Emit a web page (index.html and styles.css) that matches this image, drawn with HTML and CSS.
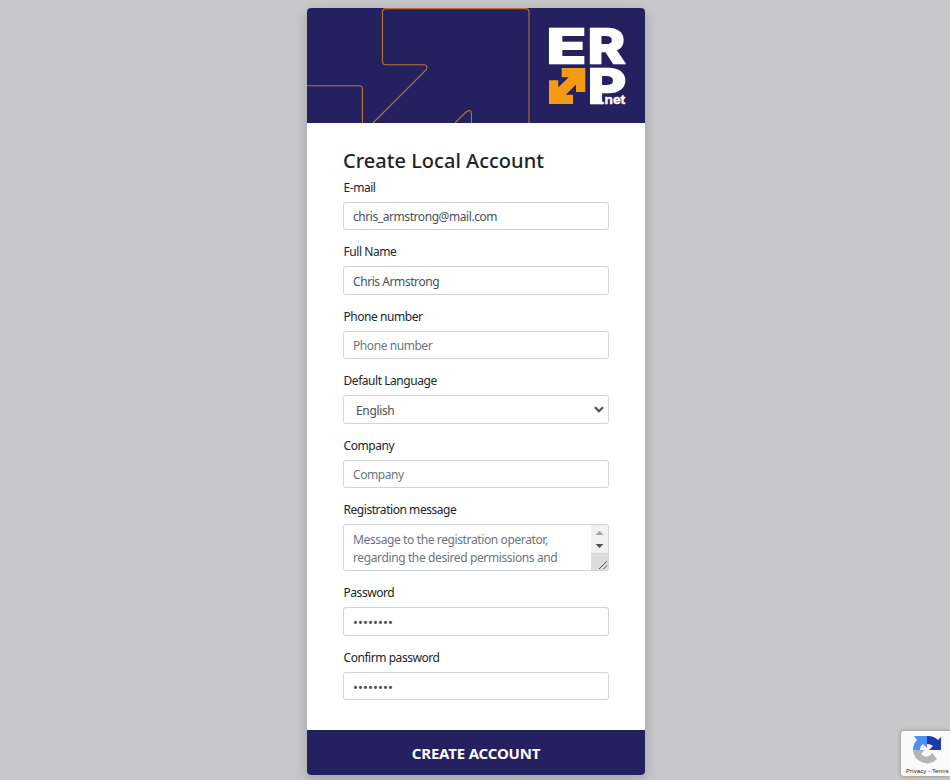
FILE: index.html
```html
<!DOCTYPE html>
<html lang="en">
<head>
<meta charset="utf-8">
<title>Create Local Account</title>
<link rel="stylesheet" href="styles.css">
</head>
<body>
<form class="card">
  <header class="banner">
    <svg width="338" height="115" viewBox="0 0 338 115">
      <g fill="none" stroke="#b3772f" stroke-width="1.1">
        <path d="M0 77.7H52Q55.4 77.7 55.4 81V115"/>
        <path d="M66 115L119 62Q121.500 57.200 117 56.800H79Q75.500 56.800 75.500 53V4Q75.500.6 79 .6H218.500Q222 .6 222 4V115"/>
        <path d="M148 115L159 104Q164.500 100.500 164.500 106V115"/>
      </g>
      <g class="logo-letters">
        <text x="239.500" y="54.600" textLength="39.500" lengthAdjust="spacingAndGlyphs">E</text>
        <text x="280.800" y="54.600" textLength="37" lengthAdjust="spacingAndGlyphs">R</text>
        <text x="280.800" y="94.600" textLength="38.200" lengthAdjust="spacingAndGlyphs">P</text>
      </g>
      <path fill="#f59a13" d="M254.700 60H278.300V84H269V76.700L258.700 86.700H266V96H242V72.300H251.300V79.300L261.700 69.300H254.700Z"/>
      <text class="logo-net" x="293.700" y="95.700" textLength="24.500" lengthAdjust="spacingAndGlyphs">.net</text>
    </svg>
  </header>
  <main class="content">
    <h1>Create Local Account</h1>
    <div class="field"><label for="email">E-mail</label><input id="email" class="control" value="chris_armstrong@mail.com"></div>
    <div class="field"><label for="name">Full Name</label><input id="name" class="control" value="Chris Armstrong"></div>
    <div class="field"><label for="phone">Phone number</label><input id="phone" class="control" placeholder="Phone number"></div>
    <div class="field"><label for="lang">Default Language</label>
      <div class="select-wrap"><select id="lang" class="control"><option>English</option></select>
      <svg class="chevron" width="10" height="7" viewBox="0 0 10 7"><path d="M1 1.200L5 5.200L9 1.200" fill="none" stroke="#495057" stroke-width="2.200"/></svg></div></div>
    <div class="field"><label for="company">Company</label><input id="company" class="control" placeholder="Company"></div>
    <div class="field"><label>Registration message</label>
      <div class="message control"><p>Message to the registration operator,<br>regarding the desired permissions and</p>
        <svg width="17" height="45" viewBox="0 0 17 45"><path fill="#f1f1f1" d="M0 0H17V28H0Z"/><path fill="#dcdcdc" d="M0 28H17V45H0Z"/><path fill="#a3a3a3" d="M4.500 10L8.500 6L12.500 10Z"/><path fill="#505050" d="M4.500 19L8.500 23L12.500 19Z"/><path d="M8 44L16 36M12.500 44L16 40.500" stroke="#555" fill="none"/></svg>
      </div></div>
    <div class="field"><label for="pw">Password</label><input id="pw" type="password" class="control" value="password"></div>
    <div class="field"><label for="pw2">Confirm password</label><input id="pw2" type="password" class="control" value="password"></div>
  </main>
  <button type="button" class="submit">CREATE ACCOUNT</button>
</form>
<aside class="recaptcha">
  <svg width="30" height="30" viewBox="0 0 30 30">
    <path fill="#1c3aa9" d="M15 1A14 14 0 0 1 26 5L29 2V15H17L21 11Q19 9 15 9Z"/>
    <path fill="#4a90f5" d="M1 15A14 14 0 0 1 5 5L2 1H15V13L11 9Q8 11 8 15Z"/>
    <path fill="#b5b5b5" d="M1 15H13L9 19Q15 25 20 18L25 24A14 14 0 0 1 1 15Z"/>
  </svg>
  <span>Privacy - Terms</span>
</aside>
</body>
</html>
```
FILE: styles.css
```css
* { box-sizing: border-box; }
body { margin: 0; padding-top: 8px; height: 780px; overflow: hidden; background: #c8c8ca; font-family: "Noto Sans", sans-serif; font-size: 12px; color: #212529; }
.card { width: 338px; height: 767px; margin: 0 auto 0 307px; display: flex; flex-direction: column; background: #fff; border-radius: 4px; overflow: hidden; box-shadow: 0 4px 14px rgba(0,0,0,.2); }
.banner { height: 115px; background: #252060; }
.banner svg { display: block; }
.logo-letters { font: 700 46.500px Inter, sans-serif; fill: #fff; stroke: #fff; stroke-width: 2.600px; }
.logo-net { font: bold 13px "Liberation Sans", sans-serif; fill: #fff; stroke: #fff; stroke-width: .4px; }
.content { flex: 1; padding: 25px 36px 0; }
h1 { margin: 0 0 6px; font-size: 20px; line-height: 25px; font-weight: 500; letter-spacing: .020px; white-space: nowrap; }
.field { display: flex; flex-direction: column; margin-bottom: 13px; }
label { line-height: 18px; margin-bottom: 5px; padding-left: .5px; letter-spacing: -.450px; }
.control { width: 100%; height: 28.430px; padding: 1px 9px 0; border: 1px solid #ced4da; border-radius: 3px; background: #fff; color: #495057; font-family: inherit; font-size: 12px; letter-spacing: -.430px; outline: 0; }
.control::placeholder { color: #6c757d; opacity: 1; }
input[type="password"] { font-size: 13px; padding-top: 2px; letter-spacing: .120px; }
.select-wrap { position: relative; }
select.control { display: block; appearance: none; padding: 2px 9px 0 12px; letter-spacing: -.350px; }
.chevron { position: absolute; right: 5px; top: 11px; }
.message { height: 47px; padding: 0 0 0 9px; display: flex; justify-content: space-between; overflow: hidden; color: #6c757d; letter-spacing: -.380px; }
.message p { margin: 6px 0 0; line-height: 18px; white-space: nowrap; }
.message svg { flex: none; }
.submit { height: 45px; border: 0; padding: 0; background: #252060; color: #fff; font: bold 15px "Noto Sans", sans-serif; letter-spacing: -.180px; }
.recaptcha { position: absolute; left: 901px; top: 731px; width: 49px; height: 45px; padding-top: 4px; overflow: hidden; background: #fafafa; border-radius: 3px 0 0 3px; box-shadow: 0 0 4px #888; }
.recaptcha svg { display: block; margin-left: 11px; }
.recaptcha span { display: block; margin-left: 5px; font: 6px/12px "Liberation Sans", sans-serif; letter-spacing: .1px; white-space: nowrap; color: #222; }
```
